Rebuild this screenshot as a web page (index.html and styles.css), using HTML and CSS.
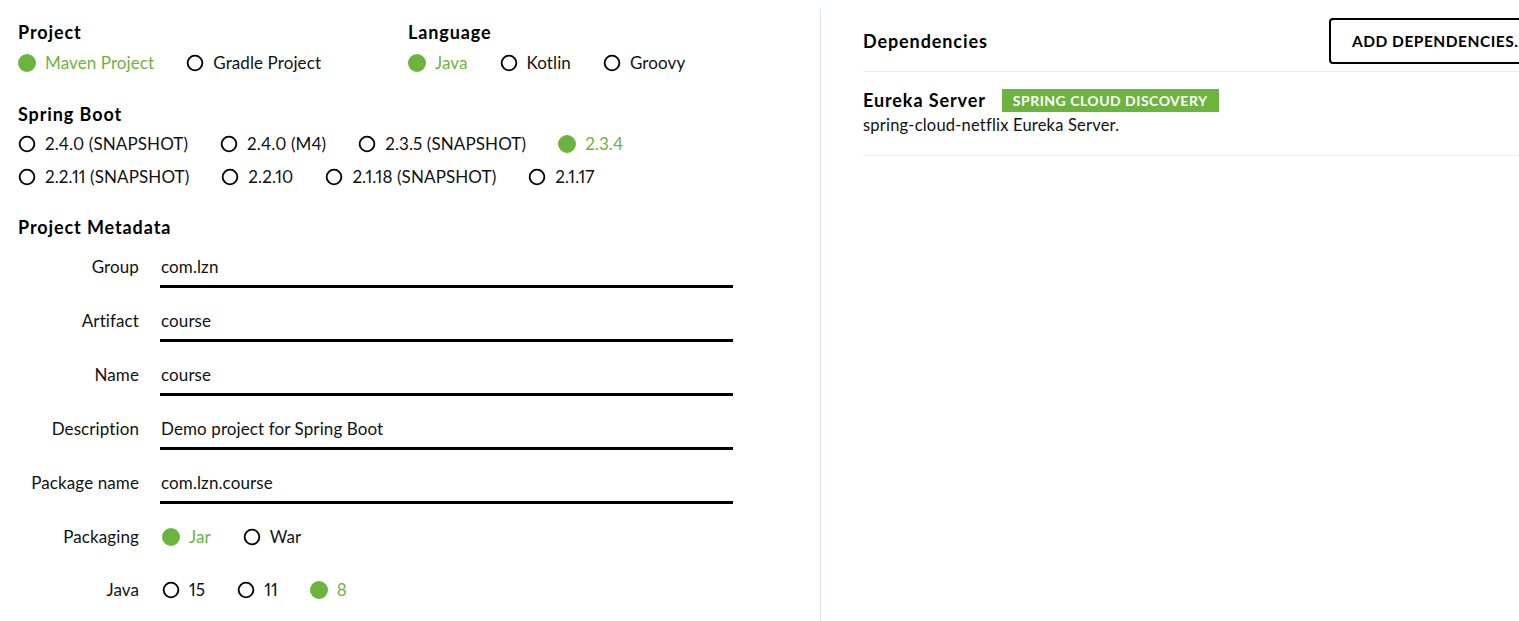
FILE: index.html
```html
<!DOCTYPE html>
<html>
<head>
<meta charset="utf-8">
<title>Spring Initializr</title>
<link rel="stylesheet" href="styles.css">
</head>
<body>
<div class="page">
  <div class="left">
    <div class="top-row">
      <div class="group group-project">
        <div class="title">Project</div>
        <div class="radios">
          <span class="radio checked"><i class="dot"></i>Maven Project</span>
          <span class="radio"><i class="dot"></i>Gradle Project</span>
        </div>
      </div>
      <div class="group">
        <div class="title">Language</div>
        <div class="radios">
          <span class="radio checked"><i class="dot"></i>Java</span>
          <span class="radio"><i class="dot"></i>Kotlin</span>
          <span class="radio"><i class="dot"></i>Groovy</span>
        </div>
      </div>
    </div>

    <div class="title title-boot">Spring Boot</div>
    <div class="radios boot-row first">
      <span class="radio"><i class="dot"></i>2.4.0 (SNAPSHOT)</span>
      <span class="radio"><i class="dot"></i>2.4.0 (M4)</span>
      <span class="radio"><i class="dot"></i>2.3.5 (SNAPSHOT)</span>
      <span class="radio checked"><i class="dot"></i>2.3.4</span>
    </div>
    <div class="radios boot-row">
      <span class="radio"><i class="dot"></i>2.2.11 (SNAPSHOT)</span>
      <span class="radio"><i class="dot"></i>2.2.10</span>
      <span class="radio"><i class="dot"></i>2.1.18 (SNAPSHOT)</span>
      <span class="radio"><i class="dot"></i>2.1.17</span>
    </div>

    <div class="title title-meta">Project Metadata</div>
    <div class="meta">
      <div class="field"><label>Group</label><div class="input">com.lzn</div></div>
      <div class="field"><label>Artifact</label><div class="input">course</div></div>
      <div class="field"><label>Name</label><div class="input">course</div></div>
      <div class="field"><label>Description</label><div class="input">Demo project for Spring Boot</div></div>
      <div class="field"><label>Package name</label><div class="input">com.lzn.course</div></div>
      <div class="field field-radio packaging"><label>Packaging</label>
        <div class="radios">
          <span class="radio checked"><i class="dot"></i>Jar</span>
          <span class="radio"><i class="dot"></i>War</span>
        </div>
      </div>
      <div class="field field-radio javas"><label>Java</label>
        <div class="radios">
          <span class="radio"><i class="dot"></i>15</span>
          <span class="radio"><i class="dot"></i>11</span>
          <span class="radio checked"><i class="dot"></i>8</span>
        </div>
      </div>
    </div>
  </div>

  <div class="right">
    <div class="dep-head">
      <div class="title">Dependencies</div>
      <button class="add-btn">ADD DEPENDENCIES...</button>
    </div>
    <div class="dep-item">
      <div class="dep-name-row">
        <span class="dep-name">Eureka Server</span>
        <span class="badge">SPRING CLOUD DISCOVERY</span>
      </div>
      <div class="dep-desc">spring-cloud-netflix Eureka Server.</div>
    </div>
  </div>
</div>
</body>
</html>
```

FILE: styles.css
```css
html, body {
  margin: 0;
  padding: 0;
  background: #fff;
  overflow: hidden;
}
body {
  font-family: Lato, "Open Sans", sans-serif;
  color: #000;
  font-size: 17px;
  letter-spacing: 0.1px;
  font-variant-numeric: proportional-nums;
}
.page {
  display: flex;
  margin-top: 8px;
  height: 613px;
}
.left {
  width: 821px;
  flex: none;
  box-sizing: border-box;
  padding: 12px 0 0 18px;
  border-right: 1px solid #dce8e8;
}
.title {
  font-weight: 700;
  font-size: 18px;
  letter-spacing: 0.9px;
  line-height: 24px;
  height: 24px;
}
.top-row {
  display: flex;
}
.group-project {
  width: 390px;
}
.radios {
  display: flex;
  align-items: center;
  gap: 32px;
  height: 30px;
  margin-top: 4px;
}
.radio {
  display: inline-flex;
  align-items: center;
  gap: 9px;
  color: #111;
  line-height: 20px;
  white-space: nowrap;
}
.dot {
  width: 18px;
  height: 18px;
  box-sizing: border-box;
  border-radius: 50%;
  border: 2px solid #000;
  flex: none;
  transform: scale(0.92);
}
.radio.checked {
  color: #6db33f;
}
.radio.checked .dot {
  background: #6db33f;
  border-color: #6db33f;
  transform: none;
}
.title-boot {
  margin-top: 24px;
}
.boot-row {
  height: 33px;
  margin-top: 0;
}
.boot-row.first {
  margin-top: 1px;
}
.title-meta {
  margin-top: 22px;
}
.meta {
  margin-top: 10px;
}
.field {
  display: flex;
  align-items: stretch;
  margin-bottom: 15px;
}
.field label {
  width: 121px;
  flex: none;
  text-align: right;
  line-height: 36px;
  margin-right: 21px;
  color: #111;
}
.input {
  width: 572px;
  height: 36px;
  line-height: 36px;
  border-bottom: 3px solid #000;
  color: #111;
  padding-left: 1px;
}
.field-radio {
  height: 36px;
  margin-bottom: 17px;
}
.field-radio .radios {
  height: 36px;
  margin-top: 0;
  padding-left: 2px;
}
.packaging .radios {
  gap: 32px;
}
.javas .radios {
  gap: 32px;
}
.right {
  width: 728px;
  flex: none;
  box-sizing: border-box;
  padding-left: 42px;
}
.dep-head {
  display: flex;
  justify-content: space-between;
  align-items: center;
  padding-top: 10px;
  padding-bottom: 7px;
  border-bottom: 1px solid #e3ecec;
}
.add-btn {
  width: 220px;
  height: 46px;
  padding: 0 0 0 21px;
  text-align: left;
  background: #fff;
  border: 2px solid #000;
  border-radius: 4px;
  font-family: Lato, "Open Sans", sans-serif;
  font-weight: 700;
  font-size: 15.5px;
  letter-spacing: 0.5px;
  color: #000;
  white-space: nowrap;
}
.dep-item {
  padding: 16px 0 20px 0;
  border-bottom: 1px solid #e3ecec;
}
.dep-name-row {
  display: flex;
  align-items: center;
  height: 24px;
}
.dep-name {
  font-weight: 700;
  font-size: 18px;
  letter-spacing: 0.9px;
}
.badge {
  margin-left: 16px;
  background: #6db33f;
  color: #fff;
  font-weight: 700;
  font-size: 14px;
  letter-spacing: 0.5px;
  line-height: 23px;
  height: 23px;
  padding: 0 11px;
}
.dep-desc {
  font-size: 16.5px;
  letter-spacing: 0.2px;
  line-height: 20px;
  margin-top: 3px;
  color: #111;
}
```
